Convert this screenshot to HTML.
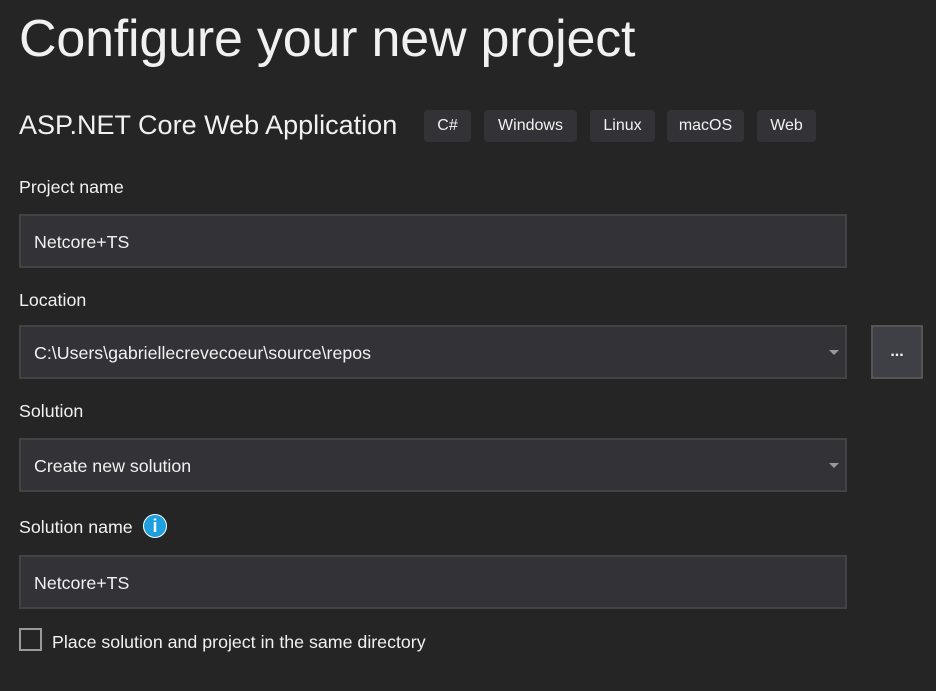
<!DOCTYPE html>
<html><head><style>
body{margin:0;width:936px;height:691px;background:#252526;color:#f1f1f1;font-family:"Liberation Sans",sans-serif;position:relative;overflow:hidden}
.a{position:absolute;white-space:nowrap}
.t{font-size:52px;left:19px;top:9px;letter-spacing:-0.2px}
.s{font-size:27px;left:19px;top:110px}
.tag{position:absolute;top:110px;height:32px;background:#333337;border-radius:4px;font-size:16px;line-height:32px;text-align:center}
.l{font-size:17.8px;left:19px}
.in{position:absolute;left:19px;height:50px;background:#333337;border:2px solid #434346;font-size:17.8px;line-height:52px;padding-left:13px;width:811px}
.arr{position:absolute;right:6px;top:23px;width:0;height:0;border-left:5px solid transparent;border-right:5px solid transparent;border-top:5px solid #999}
</style></head><body>
<div class="a t">Configure your new project</div>
<div class="a s">ASP.NET Core Web Application</div>
<div class="tag" style="left:424px;width:47px">C#</div>
<div class="tag" style="left:484px;width:93px">Windows</div>
<div class="tag" style="left:590px;width:65px">Linux</div>
<div class="tag" style="left:667px;width:77px">macOS</div>
<div class="tag" style="left:757px;width:59px">Web</div>
<div class="a l" style="top:177px">Project name</div>
<div class="in" style="top:214px">Netcore+TS</div>
<div class="a l" style="top:290px">Location</div>
<div class="in" style="top:325px">C:\Users\gabriellecrevecoeur\source\repos<div class="arr"></div></div>
<div style="position:absolute;left:871px;top:325px;width:48px;height:50px;background:#3f3f46;border:2px solid #555;text-align:center;line-height:50px;font-size:16px;font-weight:bold">...</div>
<div class="a l" style="top:401px">Solution</div>
<div class="in" style="top:438px">Create new solution<div class="arr"></div></div>
<div class="a l" style="top:517px">Solution name</div>
<div style="position:absolute;left:143px;top:514px;width:24px;height:24px;border-radius:50%;background:#1ba1e2;border:1px solid #fff;box-sizing:border-box;color:#fff;font-weight:bold;font-size:18px;line-height:23px;text-align:center;font-family:'Liberation Sans',sans-serif">i</div>
<div class="in" style="top:555px">Netcore+TS</div>
<div style="position:absolute;left:19px;top:628px;width:23px;height:23px;border:2px solid #999;box-sizing:border-box"></div>
<div class="a l" style="top:632px;left:52px">Place solution and project in the same directory</div>
</body></html>
